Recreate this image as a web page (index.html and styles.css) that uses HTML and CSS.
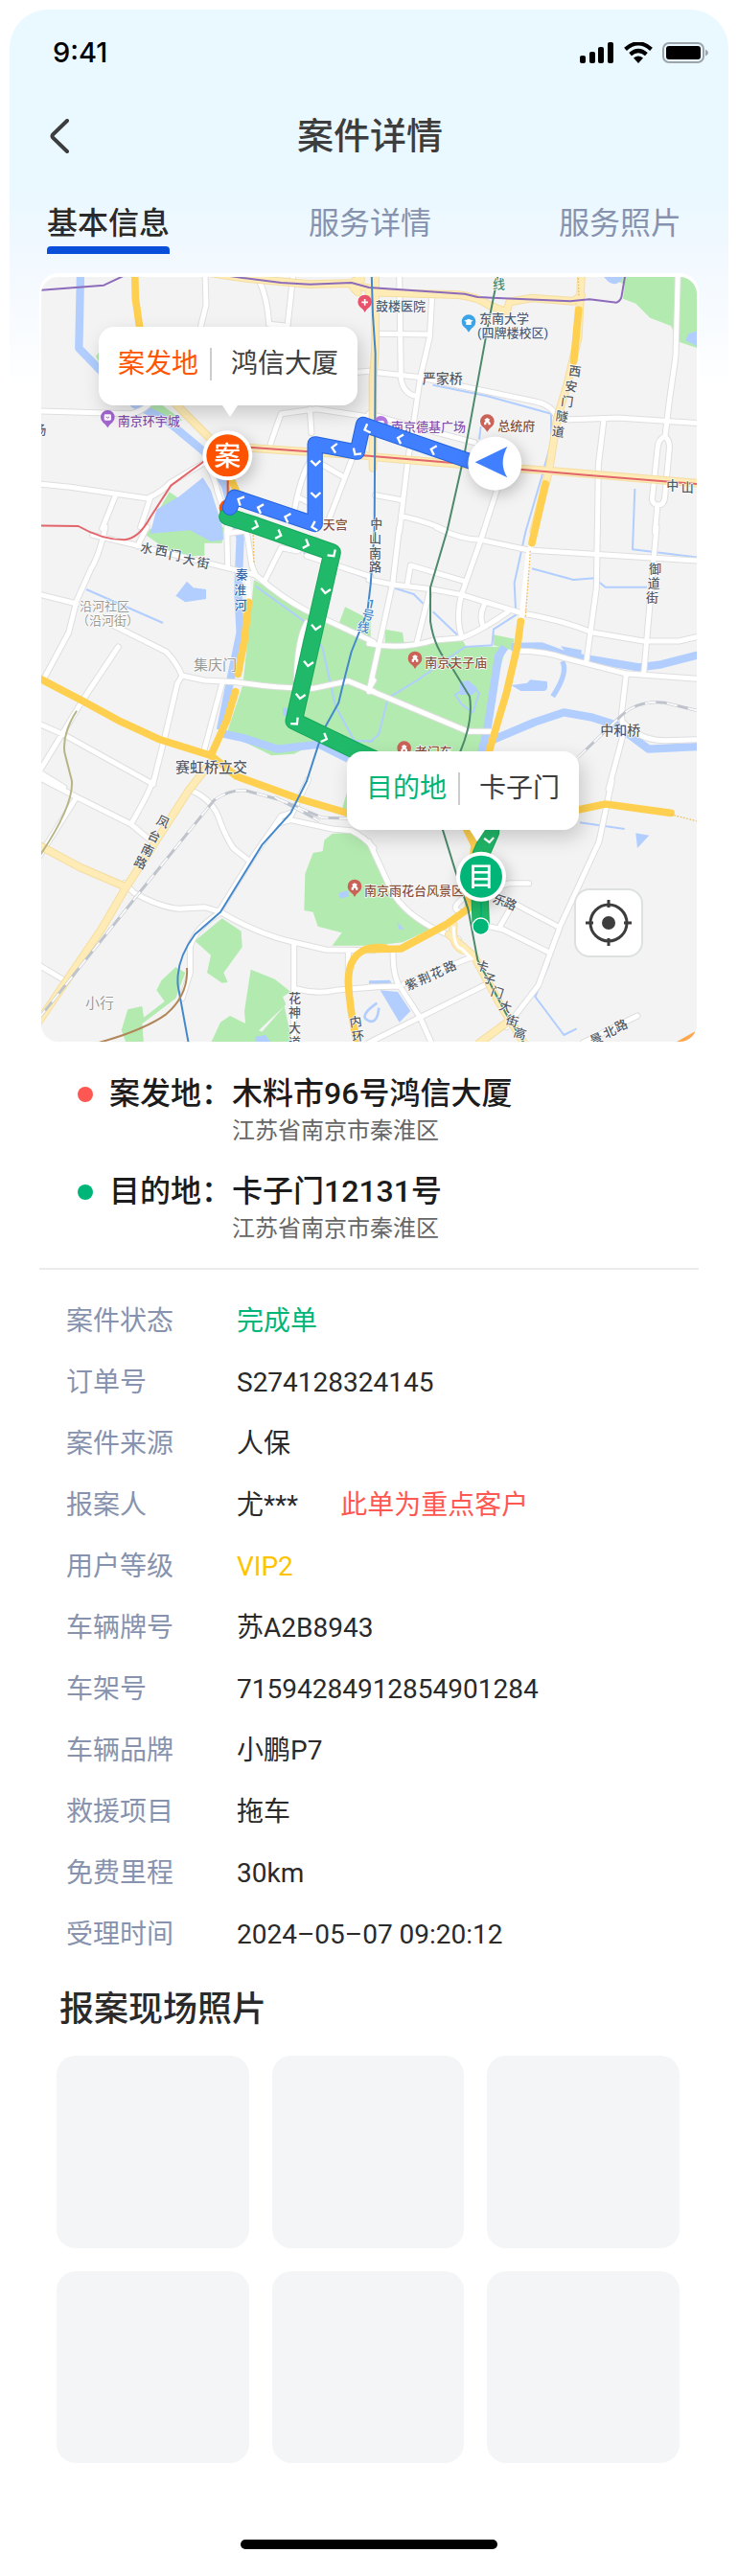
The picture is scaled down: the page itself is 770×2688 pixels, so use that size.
FILE: index.html
```html
<!DOCTYPE html>
<html lang="zh-CN">
<head>
<meta charset="utf-8">
<meta name="viewport" content="width=device-width, initial-scale=1">
<title>案件详情</title>
<link rel="stylesheet" href="styles.css">
</head>
<body>
<main class="screen">
  <div class="status-bar">
    <span class="clock">9:41</span>
    <div class="status-icons">
      <svg class="signal" viewBox="0 0 36 22" aria-hidden="true"><rect x="0" y="14" width="6" height="8" rx="2"/><rect x="10" y="10" width="6" height="12" rx="2"/><rect x="19" y="5" width="6" height="17" rx="2"/><rect x="29" y="0" width="6" height="22" rx="2"/></svg>
      <svg class="wifi" viewBox="0 0 32 22" aria-hidden="true"><path d="M2.500 7.300Q16-4.500 29.500 7.300M7.600 12.700Q16 5.400 24.400 12.700" fill="none" stroke="#000" stroke-width="4.200"/><path d="M11 16.500Q16 12.600 21 16.500L16 22Z"/></svg>
      <svg class="battery" viewBox="0 0 48 22" aria-hidden="true"><rect x="1" y="1" width="42" height="20" rx="6" fill="none" stroke="#9ca5a9" stroke-width="2"/><rect x="4" y="4" width="36" height="14" rx="3"/><path d="M45 7.500Q48 9 48 11T45 14.500Z" fill="#9ca5a9"/></svg>
    </div>
  </div>

  <header class="nav">
    <button class="back" type="button" aria-label="返回"><svg viewBox="0 0 20 36" aria-hidden="true"><path d="M18 2 3 16.500Q2 18 3 19.500L18 34"/></svg></button>
    <h1 class="nav-title">案件详情</h1>
  </header>

  <nav class="tabs">
    <button class="tab active" type="button">基本信息</button>
    <button class="tab" type="button">服务详情</button>
    <button class="tab tab-last" type="button">服务照片</button>
  </nav>

  <section class="trip">
    <div class="map">
      <svg class="map-canvas" viewBox="9 12 2052 2394" role="img" aria-label="路线地图">
        <defs>
          <path id="chev" d="M-7-15 7 0-7 15"/>
          <path id="pin" d="M0 32Q-6 21-15 15A22 22 0 1 1 15 15Q6 21 0 32Z"/>
          <path id="tower" d="M-10 10V3L-6-1V-4L-9-7Q-5-8 0-12 5-8 9-7L6-4V-1L10 3V10H3V4H-3V10Z"/>
          <g id="streets">
            <path d="M690 20Q718 80 722 160L780 166 797 10M522 0 525 100 505 180M0 432 290 440Q320 435 345 412M725 540Q745 480 760 440L870 425 1035 450M1000 310 1050 305M0 660 100 670 340 705Q380 690 415 655L525 590Q555 650 560 680L600 800M240 700 200 800M350 705 320 795M990 560Q960 640 910 770M890 600 950 635M850 590Q820 640 802 740M810 700 860 725M850 425 855 500"/>
            <g transform="translate(1035)"><path d="M95 0 100 330Q108 380 150 385M197 75 190 200 160 330 120 600 95 810M25 190 190 192M0 308 150 325 330 362 520 402Q580 415 590 460L780 453 1030 470M0 440 100 470 330 530M967 0 960 260 940 400 927 510M735 460 718 600 715 810M20 695 100 710M100 760Q210 785 245 810M400 680 350 835M925 512Q905 520 903 550L886 710Q890 725 905 726 925 725 926 700L940 550Q942 520 925 512M903 726 895 810"/></g>
            <g transform="translate(0 795)"><path d="M210 0Q190 90 165 130L120 230 95 330 20 470M0 210 120 240M230 305 400 390Q430 420 450 465L520 480 620 485Q740 505 860 505L970 482 1050 515M450 465 435 490 400 640 360 800M250 375 140 540 0 770M0 615 80 650 360 805M170 25 300 55 600 130 680 150Q760 220 840 262L1050 360M575 490 520 695M590 0 593 122M590 20 650 12M650 0 668 120 680 150M710 165 760 65 810 75 870 40M840 300Q810 350 808 480M840 90 1040 155M0 765 80 815M310 60 340 0M1050 480 1035 505"/></g>
            <g transform="translate(1035 795)"><path d="M210 0Q280 38 350 40L500 72 1030 105M95 0 75 170 0 515M0 165 75 180 200 195 290 212 480 270Q600 290 700 330L860 357 970 357 1030 343M130 120 300 170M130 120 120 180M360 10 350 40 290 210Q270 280 290 345M150 360 190 200M0 365Q100 385 200 355L290 347Q350 325 435 265M355 305Q345 275 360 245M715 0 712 190 680 425M900 0 860 460M470 388Q550 388 620 412L800 458 1030 475M805 460 790 590 798 640 750 820M795 610Q850 670 930 668L1030 665M0 510 310 640 390 640"/></g>
            <g transform="translate(0 1590)"><path d="M0-12 120 50 290 135 350 185M290 135Q345 40 358 0M120 50 0 240M270 320 300 350Q380 395 440 400L520 395 570 410Q680 475 780 500L900 528 1050 530M480 30Q550 60 570 130 590 180 610 210L660 250M565 410 670 240 760 110 790 100M760 130 790 122 920 150 980 155Q1020 175 1050 210M800 510V819M805 650Q870 668 930 655L1050 645M970 530V600M0 575 75 620M565 415Q490 460 475 520V600L450 680M845-5 790 110"/></g>
            <g transform="translate(1035 1590)"><path d="M0 190 60 320Q90 400 200 460L280 495M375 455 420 465 560 535M410 455 450 385M430 370 590 455M500 320 440 320 340 350M320 350Q240 400 290 410M760 0 720 190 600 450 530 640 430 770M0 645 95 642M75 535Q75 610 95 640L160 740 195 819M110 635 325 550M0 819 370 635M670 819 840 735M370 350 330 380"/></g>
          </g>
          <g id="avenues">
            <path d="M430 410 540 520 600 640M660 547 1045 573M540 0 640 15 850 35 970 32 1045 50M1000 60Q960 25 1010 20"/>
            <g transform="translate(1035)"><path d="M20 0V200Q20 260 12 330V610M0 60 280 68Q340 75 375 100L430 122 440 90 510 78 640 88 665 70M665 0 655 200 620 350 590 450 563 620 515 810M0 574 300 600 560 618 1030 658"/></g>
            <path d="M545 1525 470 1620 270 1930 200 2050 0 2345M0 1790 130 1860 270 1920"/>
            <path d="M1285 2070 1365 2140 1440 2280 1520 2410M1300 2040Q1290 2100 1330 2120M1475 2340 1380 2410"/>
          </g>
        </defs>

        <rect class="land" x="0" y="0" width="2080" height="2420"/>

        <g class="park">
          <path d="M180 260 200 235V300ZM340 415 370 400 450 460 430 470 350 440ZM410 685 440 705 370 755ZM330 815 360 795H580L575 845H520V885H430Z"/>
          <path d="M1780 12H2065V235L2005 215 1980 165 1915 140 1870 95 1830 80 1835 35Z"/>
          <path d="M675 960 840 1057 1050 1160 1325 1145 1340 1170H1465L1430 1290 1380 1510H1035L860 1475 800 1505 730 1510 590 1440 640 1290ZM960 1045 1040 1085V1140L940 1100ZM1085 1115 1140 1125 1145 1160 1085 1158ZM1425 1132 1490 1145 1480 1180 1425 1165Z"/>
          <path d="M970 1610V1680H950ZM920 1755 985 1750Q1040 1770 1060 1850L1125 1970 1225 2055 1140 2095 1050 2105H920L950 2065 875 2045 860 2000 832 1995 835 1880 860 1815 890 1810 895 1775Z"/>
          <path d="M490 2090 575 2020 635 2060 638 2110 580 2190 593 2220 575 2222 528 2190 540 2135ZM430 2172 460 2190 430 2270 325 2350 330 2410H275L260 2370 280 2305 325 2295 330 2330 395 2280 370 2245 385 2215ZM665 2180 740 2210 790 2250 765 2265 775 2290 680 2380 650 2370 645 2310ZM600 2325 650 2350 700 2375 770 2295 795 2410H540L570 2345Z"/>
        </g>

        <g class="water-line">
          <path class="river" d="M132 0 127 235 190 300 300 410 400 460 520 560 585 665 632 830 625 995 632 1125 602 1270 570 1430M570 1440 640 1455 750 1490 880 1475 970 1520"/>
          <path class="river" d="M1460 1170 1440 1200 1405 1430 1385 1510M1480 1170 1575 1168 1660 1200 1735 1210 1880 1234 1950 1225 2065 1195M1425 1460 1555 1405 1645 1375 1730 1390 1810 1415 1910 1490 2065 1482"/>
          <path class="creek" d="M1640 1215Q1660 1250 1610 1325"/>
          <path class="stream" d="M1235 350 1405 385 1605 440V530L1575 640 1525 810 1490 970 1495 1070 1425 1115 1420 1165 1335 1170 1185 1275 1095 1330 1065 1445 1035 1470M1385 480 1380 520M1235 1060 1325 1145M1065 970 1175 1005 1205 1035M1545 925 1675 960 1740 955 1775 983H1905M680 980 840 1095 890 1175 930 1355 990 1465 1050 1465M150 990 390 1095M830 875 1040 960M1600 2160 1555 2265 1645 2385 1685 2365M1695 1720 1835 1740M1867 675 1860 865 2065 890M1325 1350 1305 1320 1350 1290 1380 1315 1360 1375Z"/>
        </g>
        <g class="water">
          <path d="M515 640 540 680 575 790 580 835 540 840 475 805 350 815 370 740 440 700ZM465 965 485 985 525 990V1020L460 1030 430 1010ZM765 1358 785 1365V1385H765Z"/>
          <path d="M1770 12H1830Q1815 45 1785 28ZM2065 180 2035 190 2025 210 2065 230ZM1480 1290 1530 1283 1540 1273 1592 1278Q1598 1308 1580 1308L1510 1308ZM1635 1168 1700 1180V1210H1670ZM1320 1280 1345 1275 1375 1300 1360 1320 1320 1320Z"/>
          <path d="M940 1940 970 1933 973 1950 945 1958ZM1870 1753 1912 1760 1875 1800ZM1070 2245 1125 2250 1165 2310 1130 2345ZM1035 2215 1100 2213 1110 2230H1035ZM680 2390 710 2385 730 2410H680ZM1123 2030 1145 2055H1130Z"/>
          <path class="ring" d="M1060 2285Q1010 2320 1025 2335 1060 2360 1066 2300"/>
        </g>

        <use class="street-casing" href="#streets"/>
        <use class="street" href="#streets"/>
        <use class="avenue-casing" href="#avenues"/>
        <use class="avenue" href="#avenues"/>
        <path class="avenue-core" d="M1300 2045Q1300 2110 1325 2115L1360 2150"/>
        <path class="street" d="M1545 845 1533 880 1512 1085M655 955 660 1030"/>

        <g class="highway">
          <path d="M302 0 304 80 320 190M605 650 635 715M1691 115 1676 275M1587 660 1545 845M1510 1090 1500 1165 1465 1315 1410 1500M658 1030 645 1150 625 1255M617 1310 590 1400 540 1510M0 1267 140 1340 250 1400 380 1460 540 1510 620 1575 815 1645 1000 1700M1690 1680 1775 1662 1980 1690M1035 2117 1135 2115 1275 2040 1345 1990 1365 1790 1340 1740"/>
          <path d="M1085 2112Q970 2100 970 2220 975 2310 1000 2420"/>
        </g>
        <path class="orange-road" d="M1980 2430 2060 2385"/>
        <path class="tunnel" d="M1540 870 1525 1075M672 800 675 910M1980 1695 2060 1715M1690 15 1692 75"/>

        <path class="rail" d="M0 2335 320 1935 550 1650Q600 1615 650 1620L760 1650 890 1705 1005 1708M740 1640 880 1715M1690 1515 1825 1385Q1880 1335 1960 1345L2065 1370"/>
        <path class="rail-gap" d="M0 2335 320 1935 550 1650Q600 1615 650 1620L760 1650 890 1705 1005 1708M740 1640 880 1715M1690 1515 1825 1385Q1880 1335 1960 1345L2065 1370"/>

        <g class="metro">
          <path class="violet" d="M0 54 205 38 285 0M540 0 640 15 760 30 850 35 980 30 1035 45 1335 65 1375 75 1665 88 1725 82 1810 92Q1825 85 1826 70L1838 0"/>
          <path class="red" d="M0 790 125 792Q200 835 270 835 315 830 350 765L415 665 520 588M660 545 1035 572 1335 597 1515 615 1715 632 2065 660"/>
          <path class="green" d="M1440 0 1410 150 1335 560 1280 805 1227 985V1090Q1240 1180 1295 1235L1350 1325Q1362 1400 1320 1500L1265 1740 1305 1870 1345 1990 1375 2150 1465 2320 1520 2410"/>
          <path class="blue" d="M1043 0 1047 130 1055 250 1052 810 1040 975 1030 1060 980 1185Q950 1300 940 1345L890 1435 840 1590 790 1690 700 1790 570 2000 490 2070Q430 2150 437 2230L470 2410"/>
          <path class="olive" d="M120 1370Q75 1440 82 1500L105 1590Q110 1670 0 1830"/>
          <path class="brown" d="M465 2175Q470 2260 400 2320 330 2370 185 2410"/>
        </g>

        <g class="pins">
          <g transform="translate(1022 91)"><use href="#pin" fill="#e8536b"/><path d="M-10 0H10M0-10V10" class="pin-line"/></g>
          <g transform="translate(217 452)"><use href="#pin" fill="#a366d0"/><rect x="-11" y="-10" width="22" height="19" rx="4" fill="#fff"/><path d="M-5-2Q0 5 5-2" fill="none" stroke="#a366d0" stroke-width="3"/></g>
          <g transform="translate(1347 153)"><use href="#pin" fill="#3ba4e8"/><path d="M-14-4 0-10 14-4 8-1V9H-8V-1Z" fill="#fff"/></g>
          <g transform="translate(1072 470)"><use href="#pin" fill="#b277dc"/><rect x="-10" y="-8" width="20" height="17" rx="4" fill="#fff"/></g>
          <g transform="translate(1405 465)"><use href="#pin" fill="#cb6257"/><use href="#tower" fill="#fff"/></g>
          <g transform="translate(1179 1207)"><use href="#pin" fill="#cb6257"/><use href="#tower" fill="#fff"/></g>
          <g transform="translate(1145 1488)"><use href="#pin" fill="#cb6257"/><use href="#tower" fill="#fff"/></g>
          <g transform="translate(990 1921)"><use href="#pin" fill="#cb6257"/><use href="#tower" fill="#fff"/></g>
        </g>

        <g class="label">
          <g class="slate">
            <text x="1056" y="116">鼓楼医院</text>
            <text x="1380" y="155">东南大学</text>
            <text x="1374" y="201">(四牌楼校区)</text>
            <text x="-14" y="504">场</text>
          </g>
          <g class="purple"><text x="248" y="478">南京环宇城</text><text x="1104" y="496">南京德基广场</text></g>
          <g class="maroon"><text x="1438" y="491">总统府</text><text x="890" y="802">天宫</text><text x="1210" y="1233">南京夫子庙</text><text x="1178" y="1512">老门东</text><text x="1020" y="1947">南京雨花台风景区</text></g>
          <g class="dark">
            <text x="1202" y="344" class="mid">严家桥</text>
            <text x="429" y="1563" class="large">赛虹桥立交</text>
            <text x="1759" y="1447" class="mid">中和桥</text>
            <text x="1658 1646 1634 1618 1606" y="318 366 413 460 508" rotate="8">西安门隧道</text>
            <text x="1966 2012" y="678 684">中山</text>
            <text x="317 364 406 450 494" y="872 880 894 908 918" rotate="10">水西门大街</text>
            <text x="1911 1907 1902" y="939 984 1028">御道街</text>
            <text x="1039 1035 1035 1035" y="798 844 890 934">中山南路</text>
            <text x="367 339 318 296" y="1722 1768 1811 1850" rotate="25">凤台南路</text>
            <text x="783 783 783 783" y="2284 2329 2375 2420">花神大道</text>
            <text x="976 983" y="2360 2405" rotate="-8">内环</text>
            <text x="1156 1196 1235 1276" y="2246 2229 2211 2192" rotate="-24">紫荆花路</text>
            <text x="1367 1389 1414 1439 1460 1485" y="2177 2217 2260 2304 2348 2388" rotate="18">卡子门大街高</text>
            <text x="1420 1454" y="1968 1980" rotate="24">乐路</text>
            <text x="1735 1776 1812" y="2418 2396 2376" rotate="-24">景北路</text>
          </g>
          <g class="gray">
            <text x="129" y="1056">沿河社区</text><text x="120" y="1101">（沿河街）</text>
            <text x="486" y="1242" class="large">集庆门</text>
            <text x="147" y="2301" class="large">小行</text>
          </g>
          <g class="navy"><text x="617 612 614" y="957 1005 1052">秦淮河</text></g>
          <g class="azure"><text x="1028 1010 995" y="1046 1080 1118" rotate="12">1号线</text></g>
          <g class="teal"><text x="1422" y="48">线</text></g>
        </g>

        <path class="stem-red" d="M593 620V735"/>
        <circle cx="595" cy="736" r="29" fill="#fd5200"/>
        <path class="route-edge green-edge" d="M592 762 680 790 920 874 800 1402 1000 1498 1180 1580 1420 1640 1416 1750 1385 1820 1382 1950 1385 2035"/>
        <path class="route green-route" d="M592 762 680 790 920 874 800 1402 1000 1498 1180 1580 1420 1640 1416 1750 1385 1820 1382 1950 1385 2035"/>
        <path class="route-edge blue-edge" d="M600 734 614 701 866 786V535L998 560 1017 474 1390 602"/>
        <path class="route blue-route" d="M600 734 614 701 866 786V535L998 560 1017 474 1390 602"/>
        <g class="chevrons">
          <use href="#chev" transform="translate(632 711) rotate(205)"/><use href="#chev" transform="translate(694 736) rotate(198)"/><use href="#chev" transform="translate(779 765) rotate(198)"/><use href="#chev" transform="translate(863 793) rotate(165)"/><use href="#chev" transform="translate(868 694) rotate(90)"/><use href="#chev" transform="translate(868 594) rotate(90)"/><use href="#chev" transform="translate(926 547) rotate(190)"/><use href="#chev" transform="translate(995 562) rotate(125)"/><use href="#chev" transform="translate(1028 488) rotate(160)"/><use href="#chev" transform="translate(1132 518) rotate(197)"/><use href="#chev" transform="translate(1236 553) rotate(197)"/>
          <use href="#chev" transform="translate(680 790) rotate(20)"/><use href="#chev" transform="translate(753 819) rotate(20)"/><use href="#chev" transform="translate(839 849) rotate(20)"/><use href="#chev" transform="translate(921 880) rotate(55)"/><use href="#chev" transform="translate(899 995) rotate(98)"/><use href="#chev" transform="translate(869 1109) rotate(98)"/><use href="#chev" transform="translate(845 1223) rotate(98)"/><use href="#chev" transform="translate(820 1325) rotate(98)"/><use href="#chev" transform="translate(805 1406) rotate(50)"/><use href="#chev" transform="translate(896 1456) rotate(22)"/><use href="#chev" transform="translate(1411 1775) rotate(85)"/>
        </g>

        <path class="stem-green" d="M1386 1960V2030"/>
        <circle cx="1385" cy="2045" r="26" fill="#00b578" stroke="#fff" stroke-width="4"/>
        <g class="marker"><circle cx="592" cy="571" r="78" fill="#fff"/><circle cx="592" cy="571" r="66" fill="#fd5200"/><text x="592" y="602">案</text></g>
        <g class="marker"><circle cx="1386" cy="1889" r="78" fill="#fff"/><circle cx="1386" cy="1889" r="66" fill="#00b578"/><text x="1386" y="1920">目</text></g>
        <g class="marker"><circle cx="1429" cy="596" r="84" fill="#fff"/><path d="M1367 592 1468 543Q1440 595 1468 640Z" fill="#407fff"/></g>
      </svg>

      <div class="callout callout-start"><span class="callout-kind kind-start">案发地</span><span class="callout-place">鸿信大厦</span></div>
      <div class="callout callout-end"><span class="callout-kind kind-end">目的地</span><span class="callout-place">卡子门</span></div>
      <button class="locate" type="button" aria-label="定位"><svg viewBox="0 0 48 48" aria-hidden="true"><circle cx="24" cy="24" r="19" fill="none" stroke="#3d3d3d" stroke-width="3"/><circle cx="24" cy="24" r="7" fill="#3d3d3d"/><path d="M24 0V8M24 40V48M0 24H8M40 24H48" stroke="#3d3d3d" stroke-width="3"/></svg></button>
    </div>

    <ul class="places">
      <li class="place place-start"><span class="place-kind">案发地：</span><div><p class="place-name">木料市96号鸿信大厦</p><p class="place-area">江苏省南京市秦淮区</p></div></li>
      <li class="place place-end"><span class="place-kind">目的地：</span><div><p class="place-name">卡子门12131号</p><p class="place-area">江苏省南京市秦淮区</p></div></li>
    </ul>
  </section>

  <dl class="facts">
    <dt>案件状态</dt><dd class="done">完成单</dd>
    <dt>订单号</dt><dd>S274128324145</dd>
    <dt>案件来源</dt><dd>人保</dd>
    <dt>报案人</dt><dd class="reporter">尤***<span class="alert">此单为重点客户</span></dd>
    <dt>用户等级</dt><dd class="vip">VIP2</dd>
    <dt>车辆牌号</dt><dd>苏A2B8943</dd>
    <dt>车架号</dt><dd>71594284912854901284</dd>
    <dt>车辆品牌</dt><dd>小鹏P7</dd>
    <dt>救援项目</dt><dd>拖车</dd>
    <dt>免费里程</dt><dd>30km</dd>
    <dt>受理时间</dt><dd>2024–05–07 09:20:12</dd>
  </dl>

  <section class="photos">
    <h2 class="photos-title">报案现场照片</h2>
    <div class="photo-grid">
      <div class="photo"></div><div class="photo"></div><div class="photo"></div>
      <div class="photo"></div><div class="photo"></div><div class="photo"></div>
    </div>
  </section>
  <div class="home-bar"></div>
</main>
</body>
</html>
```
FILE: styles.css
```css
* { box-sizing: border-box; }

body {
  margin: 0;
  padding: 10px 10px 0;
  background: #fff;
  color: #2a2a2a;
  font-family: Roboto, "Noto Sans CJK SC", sans-serif;
}

h1, h2, p, ul, dl, dd { margin: 0; padding: 0; }

button {
  padding: 0;
  border: 0;
  background: none;
  color: inherit;
  font: inherit;
}

.screen {
  padding-bottom: 28px;
  border-radius: 40px 40px 0 0;
  background: linear-gradient(#eaf8ff 0, #eaf8ff 190px, #f1f8ff 250px, #fff 400px);
}

/* Status bar */
.status-bar {
  display: flex;
  align-items: center;
  justify-content: space-between;
  height: 90px;
  padding: 0 21px 0 45px;
  color: #000;
}
.clock { font-family: Inter, sans-serif; font-size: 29px; font-weight: 500; line-height: 40px; }
.status-icons { display: flex; gap: 9px; }
.signal { width: 36px; height: 22px; }
.wifi { width: 32px; height: 22px; }
.battery { width: 48px; height: 22px; }

/* Title row */
.nav {
  display: grid;
  grid-template-columns: 1fr auto 1fr;
  align-items: center;
  height: 84px;
  padding: 0 40px 0 42px;
}
.back { justify-self: start; display: flex; }
.back svg { width: 20px; height: 36px; fill: none; stroke: #3d3d3d; stroke-width: 4; stroke-linecap: round; }
.nav-title { color: #3d3d3d; font-size: 38px; font-weight: 500; line-height: 56px; }

/* Tabs */
.tabs {
  display: grid;
  grid-template-columns: 1fr auto 1fr;
  padding: 24px 37px 20px 39px;
}
.tab {
  position: relative;
  justify-self: start;
  padding-bottom: 7px;
  color: #8793ae;
  font-size: 32px;
  line-height: 50px;
}
.tab-last { justify-self: end; margin-right: 12px; }
.tab.active { color: #2a2a2a; font-weight: 500; }
.tab.active::after {
  content: "";
  position: absolute;
  right: 0;
  bottom: 0;
  left: 0;
  height: 8px;
  border-radius: 4px 4px 0 0;
  background: #094fda;
}

/* Map card */
.trip {
  margin: 0 31px;
  padding: 4px 0 24px;
  border-bottom: 2px solid #ebebeb;
  border-radius: 20px 20px 0 0;
  background: #fff;
}
.map {
  position: relative;
  margin: 0 2px;
  border-radius: 18px;
  overflow: hidden;
}
.map-canvas { display: block; width: 100%; height: auto; }

.land { fill: #f3f3f3; }
.park { fill: #b3eab0; }
.water { fill: #b1ceff; }
.water .ring { fill: none; stroke: #b1ceff; stroke-width: 8; }
.water-line { fill: none; stroke: #b1ceff; stroke-linejoin: round; }
.river { stroke-width: 25; }
.creek { stroke-width: 16; }
.stream { stroke-width: 6; }
.street, .street-casing, .avenue, .avenue-casing, .highway { fill: none; stroke-linejoin: round; stroke-linecap: round; }
.street-casing { stroke: #dedede; stroke-width: 21; }
.street { stroke: #fff; stroke-width: 15; }
.avenue-casing { stroke: #f5dda1; stroke-width: 26; }
.avenue { stroke: #feebb5; stroke-width: 20; }
.avenue-core { fill: none; stroke: #fff; stroke-width: 9; }
.highway { stroke: #ffd04f; stroke-width: 23; }
.orange-road { stroke: #ffa74f; stroke-width: 24; }
.tunnel { fill: none; stroke: #f0bd57; stroke-width: 4; stroke-dasharray: 5 5; }
.rail, .rail-gap { fill: none; }
.rail { stroke: #bfc4cc; stroke-width: 9; }
.rail-gap { stroke: #fafafa; stroke-width: 6; stroke-dasharray: 34 34; }
.metro { fill: none; stroke-width: 6; stroke-linejoin: round; }
.violet { stroke: #8d6bbb; }
.red { stroke: #e2656b; }
.metro .green { stroke: #4d8a6d; }
.blue { stroke: #4488cc; }
.olive { stroke: #b7b585; }
.brown { stroke: #b18759; }
.pin-line { fill: none; stroke: #fff; stroke-width: 5; }

.label { font-size: 39px; font-weight: 500; paint-order: stroke; stroke: #fff; stroke-width: 4; stroke-linejoin: round; }
.label .mid { font-size: 42px; }
.label .large { font-size: 45px; }
.slate { fill: #506078; }
.purple { fill: #8552ae; }
.maroon { fill: #87533f; }
.dark { fill: #555b65; }
.gray { fill: #999; font-weight: 400; }
.navy { fill: #3569ac; }
.azure { fill: #4488cc; }
.teal { fill: #4d8a6d; }

.stem-red { stroke: #fd5200; stroke-width: 6; }
.stem-green { stroke: #00b578; stroke-width: 6; }
.route, .route-edge { fill: none; stroke-linecap: round; stroke-linejoin: round; }
.route-edge { stroke-width: 49; }
.route { stroke-width: 43; }
.green-edge { stroke: #15a75a; stroke-width: 55; }
.green-route { stroke: #20b969; stroke-width: 49; }
.blue-edge { stroke: #2464db; }
.blue-route { stroke: #407fff; }
.chevrons { fill: none; stroke: #fff; stroke-width: 7; }
.marker { filter: drop-shadow(8px 14px 22px rgb(0 0 0 / 22%)); }
.marker text { fill: #fff; font-size: 84px; font-weight: 500; text-anchor: middle; }

.callout {
  position: absolute;
  display: flex;
  align-items: center;
  height: 82px;
  padding: 0 20px 4px;
  border-radius: 16px;
  background: #fff;
  box-shadow: 4px 8px 20px rgb(0 0 0 / 18%);
  color: #3d3d3d;
  font-size: 28px;
  line-height: 34px;
}
.callout::after {
  content: "";
  position: absolute;
  top: 100%;
  left: 129px;
  border: solid transparent;
  border-width: 12px 8px 0;
  border-top-color: #fff;
}
.callout-start { top: 52px; left: 60px; }
.callout-end { top: 62%; left: 319px; }
.callout-end::after { left: 128px; }
.callout-kind { padding-right: 12px; border-right: 2px solid #ccc; }
.callout-place { padding-left: 20px; }
.kind-start { color: #ff5500; }
.kind-end { color: #00b578; }

.locate {
  position: absolute;
  top: 80%;
  right: 56px;
  display: grid;
  place-items: center;
  width: 72px;
  height: 72px;
  border: 2px solid #dce1e0;
  border-radius: 16px;
  background: #fff;
}
.locate svg { width: 48px; height: 48px; }

/* Addresses */
.places {
  display: grid;
  gap: 24px;
  padding: 32px 0 0 40px;
  list-style: none;
}
.place { display: flex; line-height: 44px; }
.place::before {
  content: "";
  width: 16px;
  height: 16px;
  margin: 15px 17px 0 0;
  border-radius: 50%;
}
.place-start::before { background: #ff5751; }
.place-end::before { background: #00b578; }
.place-kind, .place-name { color: #1c1c1c; font-size: 32px; font-weight: 500; }
.place-area { color: #666; font-size: 24px; line-height: 34px; }

/* Case details */
.facts {
  display: grid;
  grid-template-columns: 178px 1fr;
  row-gap: 24px;
  padding: 34px 60px 0 59px;
  font-size: 28px;
  line-height: 40px;
}
.facts dt { color: #8793ae; }
.facts .done { color: #00b578; }
.facts .vip { color: #ffc300; }
.reporter { display: flex; gap: 44px; }
.alert { color: #ff5751; }

/* Photos */
.photos { padding: 34px 51px 0 49px; }
.photos-title { padding-left: 3px; font-size: 36px; font-weight: 500; line-height: 48px; }
.photo-grid {
  display: grid;
  grid-template-columns: repeat(3, 1fr);
  gap: 24px;
  margin-top: 24px;
}
.photo { aspect-ratio: 1; border-radius: 20px; background: #f3f5f7; }

.home-bar {
  width: 268px;
  height: 10px;
  margin: 80px auto 0;
  border-radius: 5px;
  background: #000;
}
```
